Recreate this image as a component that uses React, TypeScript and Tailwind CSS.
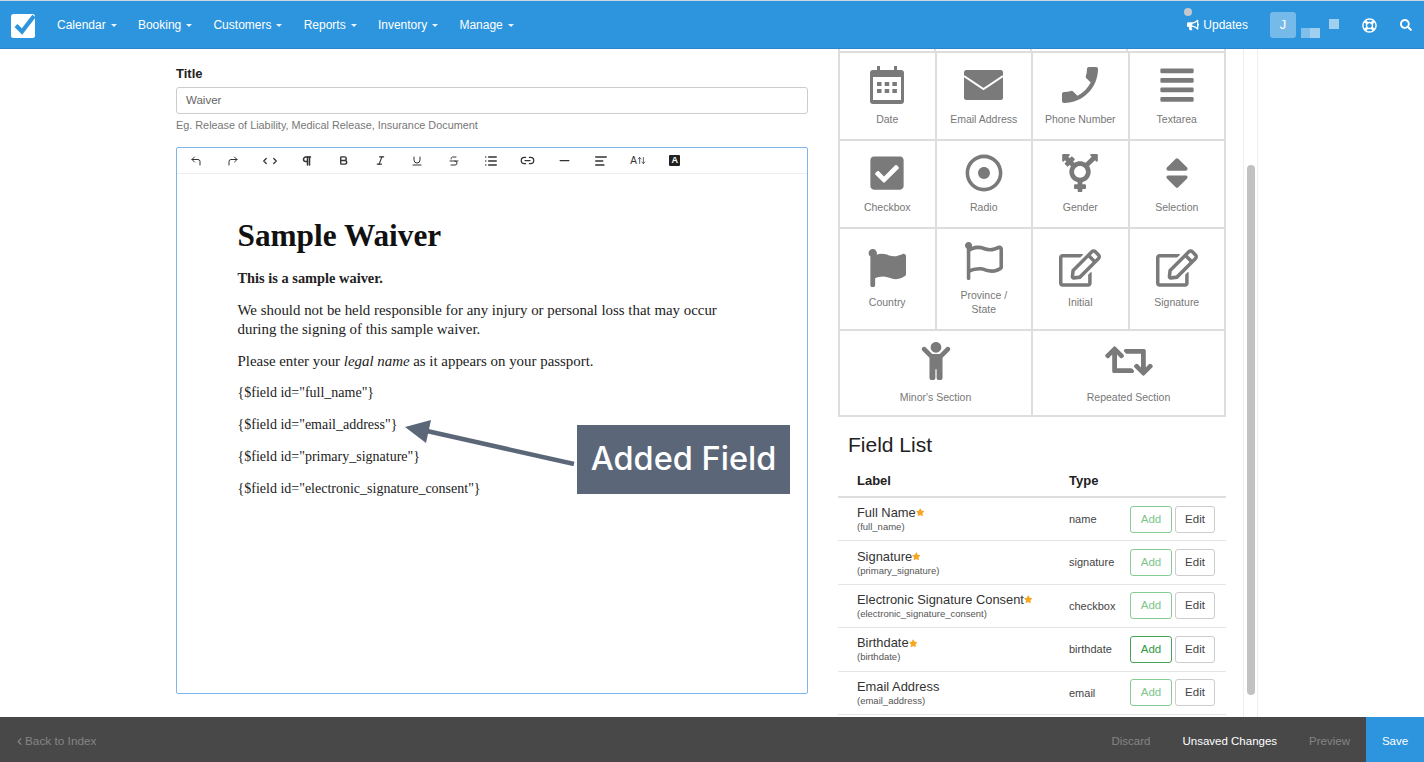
import type { ReactNode } from 'react'
import { AlignLeft, ArrowUpDown, Bold, ChevronLeft, ChevronRight, CornerUpLeft, CornerUpRight, Italic, Link2, List, Minus, Pilcrow, Strikethrough, Underline } from 'lucide-react'
import { FaBullhorn, FaCheckSquare, FaChild, FaFlag, FaRegDotCircle, FaRegEdit, FaRegFlag, FaRegLifeRing, FaRetweet, FaSearch, FaSort, FaStar, FaTransgenderAlt, FaAlignJustify } from 'react-icons/fa'
import { IoMdCall } from 'react-icons/io'

const NAV_ITEMS = ['Calendar', 'Booking', 'Customers', 'Reports', 'Inventory', 'Manage']

function CalendarIcon() {
  return (
    <svg viewBox="0 0 34 38" className="h-[38px] w-[34px] fill-current">
      <path d="M7 0h3v4h14V0h3v4h4a3 3 0 0 1 3 3v28a3 3 0 0 1-3 3H3a3 3 0 0 1-3-3V7a3 3 0 0 1 3-3h4z" />
      <rect x="3" y="11" width="28" height="23" fill="#fff" />
      <g>
        <rect x="7" y="16" width="4.5" height="4" /><rect x="14.7" y="16" width="4.5" height="4" /><rect x="22.4" y="16" width="4.5" height="4" />
        <rect x="7" y="23" width="4.5" height="4" /><rect x="14.7" y="23" width="4.5" height="4" /><rect x="22.4" y="23" width="4.5" height="4" />
      </g>
    </svg>
  )
}

function MailIcon() {
  return (
    <svg viewBox="0 0 39 30" className="h-[30px] w-[39px]">
      <rect width="39" height="30" rx="2.5" fill="currentColor" />
      <path d="M0 6l19.5 13L39 6" fill="none" stroke="#fff" strokeWidth="2" />
    </svg>
  )
}

const FIELD_TILES: { label: string; icon: ReactNode; wide?: boolean; tall?: boolean }[] = [
  { label: 'Date', icon: <CalendarIcon /> },
  { label: 'Email Address', icon: <MailIcon /> },
  { label: 'Phone Number', icon: <IoMdCall className="-scale-x-100 text-[48px]" /> },
  { label: 'Textarea', icon: <FaAlignJustify className="text-[38px]" /> },
  { label: 'Checkbox', icon: <FaCheckSquare className="text-[38px]" /> },
  { label: 'Radio', icon: <FaRegDotCircle className="text-[38px]" /> },
  { label: 'Gender', icon: <FaTransgenderAlt className="text-[38px]" /> },
  { label: 'Selection', icon: <FaSort className="text-[38px]" /> },
  { label: 'Country', icon: <FaFlag className="text-[38px]" />, tall: true },
  { label: 'Province / State', icon: <FaRegFlag className="text-[38px]" />, tall: true },
  { label: 'Initial', icon: <FaRegEdit className="text-[42px]" />, tall: true },
  { label: 'Signature', icon: <FaRegEdit className="text-[42px]" />, tall: true },
  { label: "Minor's Section", icon: <FaChild className="text-[38px]" />, wide: true },
  { label: 'Repeated Section', icon: <FaRetweet className="text-[48px]" />, wide: true },
]

const FIELDS = [
  { label: 'Full Name', id: 'full_name', type: 'name', star: true },
  { label: 'Signature', id: 'primary_signature', type: 'signature', star: true },
  { label: 'Electronic Signature Consent', id: 'electronic_signature_consent', type: 'checkbox', star: true },
  { label: 'Birthdate', id: 'birthdate', type: 'birthdate', star: true, active: true },
  { label: 'Email Address', id: 'email_address', type: 'email' },
]

const TOOLBAR = [
  <CornerUpLeft size={12} />,
  <CornerUpRight size={12} />,
  <span className="flex"><ChevronLeft size={10} strokeWidth={3} /><ChevronRight size={10} strokeWidth={3} /></span>,
  <Pilcrow size={12} strokeWidth={3} />,
  <Bold size={11} strokeWidth={3} />,
  <Italic size={11} strokeWidth={2.5} />,
  <Underline size={12} />,
  <Strikethrough size={12} />,
  <List size={14} strokeWidth={2.5} />,
  <Link2 size={15} strokeWidth={2} />,
  <Minus size={15} strokeWidth={2} />,
  <AlignLeft size={14} strokeWidth={2.5} />,
  <span className="flex items-center text-[10px]">A<ArrowUpDown size={9} /></span>,
  <span className="flex h-[11px] w-[11px] items-center justify-center rounded-[1px] bg-[#222] text-[9px] font-bold leading-none text-white">A</span>,
]

function Caret() {
  return <span className="ml-[5px] inline-block h-0 w-0 border-x-[3.5px] border-t-[3.5px] border-x-transparent border-t-white/90 align-middle" />
}

function TopNav() {
  return (
    <header className="flex h-[49px] shrink-0 items-center border-t border-b border-t-[#c9d9e6] border-b-[#2a86c8] bg-[#2d95de] pt-[1px] text-[12px] text-white">
      <svg viewBox="0 0 26 26" className="ml-[10px] h-[26px] w-[26px] shrink-0">
        <rect x="1" y="2" width="24" height="24" rx="2.5" fill="#fff" />
        <path d="M6 13.5l6 6L24 4" fill="none" stroke="#2d95de" strokeWidth="4.2" />
      </svg>
      <nav className="ml-[21px] flex gap-[21.2px]">
        {NAV_ITEMS.map(item => (
          <span key={item} className="whitespace-nowrap">{item}<Caret /></span>
        ))}
      </nav>
      <div className="ml-auto flex items-center">
        <div className="relative flex items-center gap-[4px]">
          <span className="absolute -top-[8px] left-[-3px] h-[8px] w-[8px] rounded-full bg-[#c4c9cc]" />
          <FaBullhorn className="text-[12px]" />
          <span>Updates</span>
        </div>
        <span className="ml-[22px] flex h-[26px] w-[26px] items-center justify-center rounded-[3px] bg-white/35 text-[13px]">J</span>
        <div className="relative ml-[5px] h-[26px] w-[38px]">
          <span className="absolute top-[16px] left-0 h-[10px] w-[9px] bg-white/40" />
          <span className="absolute top-[16px] left-[9px] h-[10px] w-[10px] bg-white/55" />
          <span className="absolute top-[7px] left-[28px] h-[10px] w-[10px] bg-white/55" />
        </div>
        <FaRegLifeRing className="ml-[23px] text-[15px]" />
        <FaSearch className="ml-[23px] mr-[12px] text-[12px]" />
      </div>
    </header>
  )
}

function WaiverEditor() {
  return (
    <section className="w-[632px] shrink-0 pt-[17px]">
      <label className="block text-[13px] font-bold leading-[15px] text-[#222]">Title</label>
      <div className="mt-[6px] flex h-[27px] items-center rounded-[3px] border border-[#ccc] px-[9px] pt-[1px] text-[11.5px] text-[#666]">Waiver</div>
      <p className="mt-[4px] text-[10.85px] leading-[14px] text-[#777]">Eg. Release of Liability, Medical Release, Insurance Document</p>
      <div className="relative mt-[15px] h-[547px] rounded-[2px] border border-[#7fb5ee]">
        <div className="flex h-[26px] items-center border-b border-[#eee] pl-[1px] text-[#333]">
          {TOOLBAR.map((icon, i) => (
            <span key={i} className="flex w-[36.8px] items-center justify-center">{icon}</span>
          ))}
        </div>
        <div className="pl-[60.5px] pr-[88px] pt-[44px] font-['Liberation_Serif',serif] text-[14.9px] leading-[19px] text-[#222]">
          <h1 className="text-[31.3px] font-bold leading-[36px] text-[#111]">Sample Waiver</h1>
          <p className="mt-[15px] text-[14.4px] font-bold">This is a sample waiver.</p>
          <p className="mt-[13px]">We should not be held responsible for any injury or personal loss that may occur during the signing of this sample waiver.</p>
          <p className="mt-[13px]">Please enter your <em>legal name</em> as it appears on your passport.</p>
          <div className="pt-[12px] text-[14px]">
            <p>{'{$field id="full_name"}'}</p>
            <p className="mt-[13px]">{'{$field id="email_address"}'}</p>
            <p className="mt-[13px]">{'{$field id="primary_signature"}'}</p>
            <p className="mt-[13px]">{'{$field id="electronic_signature_consent"}'}</p>
          </div>
        </div>
        <svg viewBox="0 0 172 48" className="absolute top-[270px] left-[228px] h-[48px] w-[172px]">
          <path d="M169 46L22 13" stroke="#5b6778" strokeWidth="4.5" fill="none" />
          <path d="M0 9L26 2L21 25Z" fill="#5b6778" />
        </svg>
        <div className="absolute top-[277px] left-[400px] flex h-[69px] w-[213px] items-center justify-center bg-[#5b6778] font-['Inter',sans-serif] text-[32.5px] font-medium text-white">
          Added Field
        </div>
      </div>
    </section>
  )
}

function FieldPalette() {
  return (
    <div>
      <div className="grid h-[2px] grid-cols-4 border-x-2 border-[#ddd]">
        <span className="border-r-2 border-[#ddd]" />
        <span className="border-r-2 border-[#ddd]" />
        <span className="border-r-2 border-[#ddd]" />
        <span />
      </div>
      <div className="grid grid-cols-4 border-l-2 border-t-2 border-[#ddd] text-[#7a7a7a]">
        {FIELD_TILES.map(tile => (
          <div
            key={tile.label}
            className={`flex flex-col items-center border-b-2 border-r-2 border-[#ddd] text-center text-[10.5px] leading-[14px] text-[#777] ${
              tile.wide ? 'col-span-2 h-[86px] pt-[8px]' : tile.label === 'Province / State' ? 'h-[102px] pt-[10px]' : tile.tall ? 'h-[102px] pt-[17px]' : 'h-[88px] pt-[10px]'
            }`}
          >
            <span className="flex h-[44px] items-center justify-center text-[#7a7a7a]">{tile.icon}</span>
            <span className={tile.label === 'Province / State' ? 'mt-[5px] w-[60px]' : tile.tall ? 'mt-[5px]' : tile.wide ? 'mt-[7px]' : 'mt-[5px]'}>{tile.label}</span>
          </div>
        ))}
      </div>
    </div>
  )
}

function FieldList() {
  return (
    <div className="mt-[14px]">
      <h2 className="pl-[10px] text-[21px] leading-[28px] text-[#222]">Field List</h2>
      <div className="mt-[8px] flex h-[31px] items-center border-b-2 border-[#ddd] pb-[2px] text-[13px] font-bold text-[#222]">
        <span className="w-[231px] pl-[19px]">Label</span>
        <span>Type</span>
      </div>
      {FIELDS.map(field => (
        <div key={field.id} className="flex h-[43.4px] items-center border-b border-[#e4e4e4]">
          <div className="w-[231px] pl-[19px]">
            <div className="flex items-center text-[12.9px] leading-[15px] text-[#333]">
              {field.label}
              {field.star && <FaStar className="text-[8.5px] text-[#f5a623]" />}
            </div>
            <div className="text-[9.5px] leading-[13px] text-[#555]">({field.id})</div>
          </div>
          <span className="w-[61px] text-[11px] text-[#444]">{field.type}</span>
          <button className={`h-[27px] w-[42px] rounded-[3px] border text-[11.5px] ${field.active ? 'border-[#46a35a] text-[#2f9a45]' : 'border-[#86cc94] text-[#7cc68a]'}`}>Add</button>
          <button className="ml-[3px] h-[27px] w-[40px] rounded-[3px] border border-[#ccc] text-[11.5px] text-[#444]">Edit</button>
        </div>
      ))}
    </div>
  )
}

function BottomBar() {
  return (
    <footer className="flex h-[45px] shrink-0 items-center bg-[#484848] text-[11.5px]">
      <span className="ml-[14px] flex items-center pt-[4px] text-[#858585]">
        <ChevronLeft size={11} strokeWidth={2.5} />
        <span className="text-[11.8px]">Back to Index</span>
      </span>
      <div className="ml-auto flex items-center">
        <span className="pt-[4px] text-[#858585]">Discard</span>
        <span className="ml-[32px] pt-[4px] text-white">Unsaved Changes</span>
        <span className="ml-[32px] pt-[4px] text-[#858585]">Preview</span>
        <span className="ml-[16px] flex h-[45px] w-[58px] items-center justify-center bg-[#2d95de] pt-[4px] text-white">Save</span>
      </div>
    </footer>
  )
}

export default function App() {
  return (
    <div className="flex h-screen flex-col overflow-hidden bg-white font-['Liberation_Sans',sans-serif]">
      <TopNav />
      <main className="flex min-h-0 flex-1 overflow-hidden pl-[176px]">
        <WaiverEditor />
        <aside className="ml-[30px] w-[388px] shrink-0">
          <FieldPalette />
          <FieldList />
        </aside>
        <div className="ml-[17px] w-[15px] shrink-0 border-x border-[#eee] pl-[3px] pt-[116px]">
          <div className="h-[530px] w-[8px] rounded-full bg-[#c2c2c2]" />
        </div>
      </main>
      <BottomBar />
    </div>
  )
}
